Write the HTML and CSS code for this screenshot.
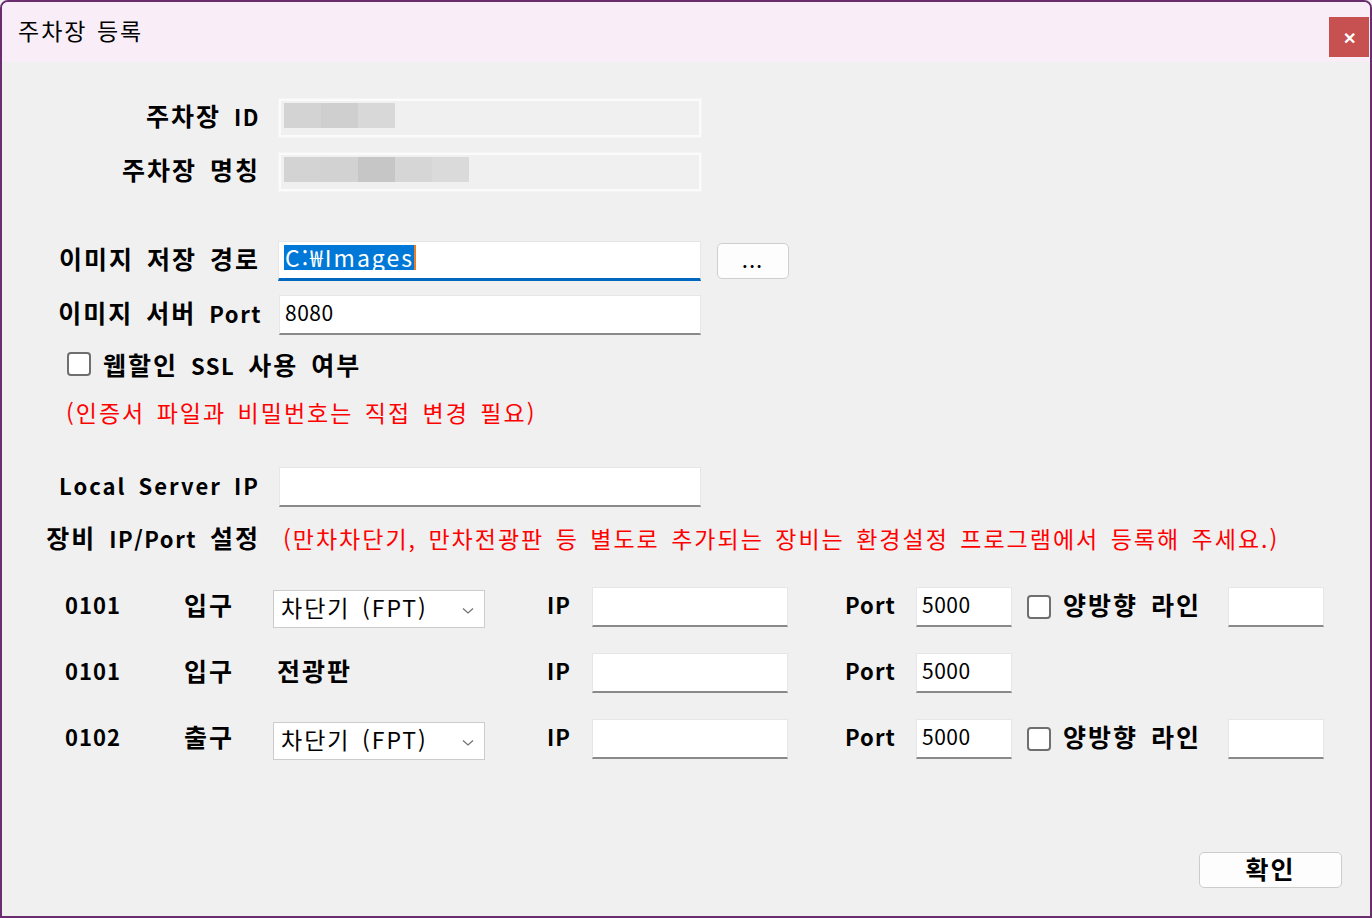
FILE: index.html
```html
<!DOCTYPE html>
<html lang="ko">
<head>
<meta charset="utf-8">
<title>주차장 등록</title>
<link rel="stylesheet" href="styles.css">
</head>
<body>
<div class="window">
  <div class="titlebar">
    <div class="title">주차장 등록</div>
    <div class="close">&#x2715;</div>
  </div>
  <div class="content">
    <div class="row r-id">
      <div class="label">주차장 <span class="lat">ID</span></div>
      <div class="field disabled"><span class="blur b1"></span><span class="blur b2"></span><span class="blur b3"></span></div>
    </div>
    <div class="row r-name">
      <div class="label">주차장 명칭</div>
      <div class="field disabled"><span class="blur b1"></span><span class="blur b4"></span><span class="blur b5"></span><span class="blur b6"></span><span class="blur b7"></span></div>
    </div>
    <div class="row r-path">
      <div class="label">이미지 저장 경로</div>
      <div class="field input focused"><span class="sel">C:₩Images</span><span class="caret"></span></div>
      <div class="browse">...</div>
    </div>
    <div class="row r-port">
      <div class="label">이미지 서버 <span class="lat">Port</span></div>
      <div class="field input"><span class="val">8080</span></div>
    </div>
    <div class="row r-ssl">
      <span class="check"></span><span class="label-b">웹할인 <span class="lat">SSL</span> 사용 여부</span>
    </div>
    <div class="row r-note">
      <span class="red">(인증서 파일과 비밀번호는 직접 변경 필요)</span>
    </div>
    <div class="row r-local">
      <div class="label"><span class="lat wide">Local Server IP</span></div>
      <div class="field input"></div>
    </div>
    <div class="row r-dev">
      <div class="label dev-label">장비 <span class="lat">IP/Port</span> 설정</div>
      <span class="red">(만차차단기, 만차전광판 등 별도로 추가되는 장비는 환경설정 프로그램에서 등록해 주세요.)</span>
    </div>

    <div class="device r-d1">
      <span class="code">0101</span>
      <span class="kind">입구</span>
      <div class="select"><span>차단기 (FPT)</span><svg class="chev" viewBox="0 0 12 8" width="12" height="8"><path d="M1 1.5 L6 6 L11 1.5" fill="none" stroke="#707070" stroke-width="1.2"/></svg></div>
      <span class="iplbl">IP</span>
      <div class="input ipf"></div>
      <span class="portlbl">Port</span>
      <div class="input portf"><span class="val">5000</span></div>
      <span class="check dcheck"></span>
      <span class="bidir">양방향 라인</span>
      <div class="input extra"></div>
    </div>
    <div class="device r-d2">
      <span class="code">0101</span>
      <span class="kind">입구</span>
      <span class="board">전광판</span>
      <span class="iplbl">IP</span>
      <div class="input ipf"></div>
      <span class="portlbl">Port</span>
      <div class="input portf"><span class="val">5000</span></div>
    </div>
    <div class="device r-d3">
      <span class="code">0102</span>
      <span class="kind">출구</span>
      <div class="select"><span>차단기 (FPT)</span><svg class="chev" viewBox="0 0 12 8" width="12" height="8"><path d="M1 1.5 L6 6 L11 1.5" fill="none" stroke="#707070" stroke-width="1.2"/></svg></div>
      <span class="iplbl">IP</span>
      <div class="input ipf"></div>
      <span class="portlbl">Port</span>
      <div class="input portf"><span class="val">5000</span></div>
      <span class="check dcheck"></span>
      <span class="bidir">양방향 라인</span>
      <div class="input extra"></div>
    </div>

    <div class="footer">
      <div class="ok">확인</div>
    </div>
  </div>
</div>
</body>
</html>
```
FILE: styles.css
```css
* { box-sizing: border-box; }
html, body { margin: 0; padding: 0; background: #f0f0f0; }
body {
  font-family: "Noto Sans CJK KR", "Noto Sans", sans-serif;
  color: #000;
}
.window {
  width: 1372px;
  height: 918px;
  border: 2px solid #6a2d6e;
  border-radius: 8px 8px 0 0;
  background: #f0f0f0;
  display: flex;
  flex-direction: column;
  overflow: hidden;
}
.titlebar {
  height: 60px;
  flex: none;
  background: #f9eef7;
  display: flex;
  align-items: flex-start;
  justify-content: space-between;
}
.title {
  font-size: 23px;
  margin: 12px 0 0 16px;
  line-height: 32px;
  letter-spacing: 2px;
  word-spacing: 1px;
}
.close {
  width: 40px;
  height: 40px;
  margin: 15px 1px 0 0;
  background: #c75050;
  color: #fff;
  font-size: 16px;
  font-weight: bold;
  display: flex;
  align-items: center;
  justify-content: center;
}
.content {
  flex: 1;
  display: flex;
  flex-direction: column;
}
.row {
  display: flex;
  align-items: center;
}
.label, .label-b, .kind, .board, .bidir, .ok {
  font-size: 25px;
  font-weight: bold;
  letter-spacing: 2px;
  word-spacing: 4px;
  line-height: 1.3;
  white-space: nowrap;
}
.label, .kind, .board, .bidir, .code, .iplbl, .portlbl {
  padding-bottom: 5px;
}
.label {
  width: 258px;
  flex: none;
  text-align: right;
  margin-right: 18px;
}
.lat {
  font-size: 22px;
  letter-spacing: 1.5px;
}
.lat.wide { letter-spacing: 2px; }
.field {
  width: 422px;
  height: 38px;
  flex: none;
}
.disabled {
  border: 2px solid #fbfbfb;
  box-shadow: 0 0 0 1px #f4f4f4;
  background: #f0f0f0;
  padding: 2px 0 0 3px;
  display: flex;
  align-items: flex-start;
}
.blur { width: 37px; height: 25px; display: block; }
.b1 { background: #d3d3d3; }
.b2 { background: #cfcfcf; }
.b3 { background: #d8d8d8; }
.b4 { background: #d2d2d2; }
.b5 { background: #c6c6c6; }
.b6 { background: #d6d6d6; }
.b7 { background: #dadada; }

.input {
  background: #fff;
  border: 1px solid #e6e6e6;
  border-bottom: 2px solid #8a8a8a;
  height: 40px;
  display: flex;
  align-items: center;
  padding-left: 5px;
  font-size: 21px;
  font-weight: normal;
  letter-spacing: 0.5px;
}
.val { line-height: 1; margin-top: -5px; }
.focused {
  border-bottom: 3px solid #0067c0;
  width: 423px;
  padding-left: 5px;
  align-items: flex-start;
  padding-top: 3px;
}
.sel {
  background: #0078d7;
  color: #fff;
  font-size: 23px;
  letter-spacing: 2px;
  line-height: 25px;
  height: 25px;
  padding: 0 0 0 1px;
}
.caret { width: 2px; height: 25px; background: #e87e2a; }
.browse {
  width: 72px;
  height: 36px;
  margin-left: 16px;
  border: 1px solid #cfcfcf;
  border-radius: 5px;
  background: #fdfdfd;
  display: flex;
  align-items: center;
  justify-content: center;
  font-size: 16px;
  font-weight: bold;
  letter-spacing: 2px;
}

.r-id { margin-top: 37px; }
.r-id .label, .r-name .label, .r-local .label { margin-right: 19px; }
.r-name { margin-top: 16px; }
.r-path { margin-top: 50px; }
.r-port { margin-top: 14px; }
.r-port .label { margin-left: 2px; margin-right: 17px; }
.r-ssl { margin-top: 11px; height: 36px; padding-left: 65px; }
.r-note { margin-top: 14px; height: 34px; padding-left: 64px; }
.r-local { margin-top: 37px; }
.r-dev { margin-top: 14px; height: 38px; }
.dev-label { margin-right: 23px; }

.check {
  width: 24px;
  height: 24px;
  border: 2px solid #6f6f6f;
  border-radius: 4px;
  background: #fff;
  flex: none;
  display: block;
}
.label-b { margin-left: 12px; }
.red, .select span {
  color: #ff0000;
  font-size: 23px;
  letter-spacing: 2px;
  word-spacing: 3px;
  line-height: 1.3;
  white-space: nowrap;
}
.r-dev .red { padding-bottom: 3px; }
.select span { color: #000; }

.device {
  display: grid;
  grid-template-columns: 119px 89px 212px 62px 45px 196px 57px 71px 96px 15px 36px 165px 96px;
  grid-template-rows: 40px;
  align-items: center;
  padding-left: 63px;
}
.r-d1 { margin-top: 28px; }
.r-d2 { margin-top: 26px; }
.r-d3 { margin-top: 26px; }
.code, .iplbl, .portlbl {
  font-size: 22px;
  font-weight: bold;
  letter-spacing: 1px;
  line-height: 1.3;
}
.code { grid-column: 1; }
.kind { grid-column: 2; }
.select, .board { grid-column: 3; }
.iplbl { grid-column: 5; }
.ipf { grid-column: 6; }
.portlbl { grid-column: 8; }
.portf { grid-column: 9; }
.dcheck { grid-column: 11; }
.bidir { grid-column: 12; }
.extra { grid-column: 13; }
.board { margin-left: 4px; }
.select {
  height: 38px;
  margin-top: 3px;
  margin-bottom: -1px;
  background: #fff;
  border: 1px solid #cccccc;
  display: flex;
  align-items: center;
  justify-content: space-between;
  padding: 0 10px 3px 7px;
}
.chev { margin-top: 6px; }

.footer {
  margin-top: auto;
  display: flex;
  justify-content: flex-end;
  padding: 0 28px 28px 0;
}
.ok {
  width: 143px;
  height: 36px;
  border: 1px solid #cccccc;
  border-radius: 5px;
  background: #fdfdfd;
  display: flex;
  align-items: center;
  justify-content: center;
  padding-bottom: 3px;
}
```
